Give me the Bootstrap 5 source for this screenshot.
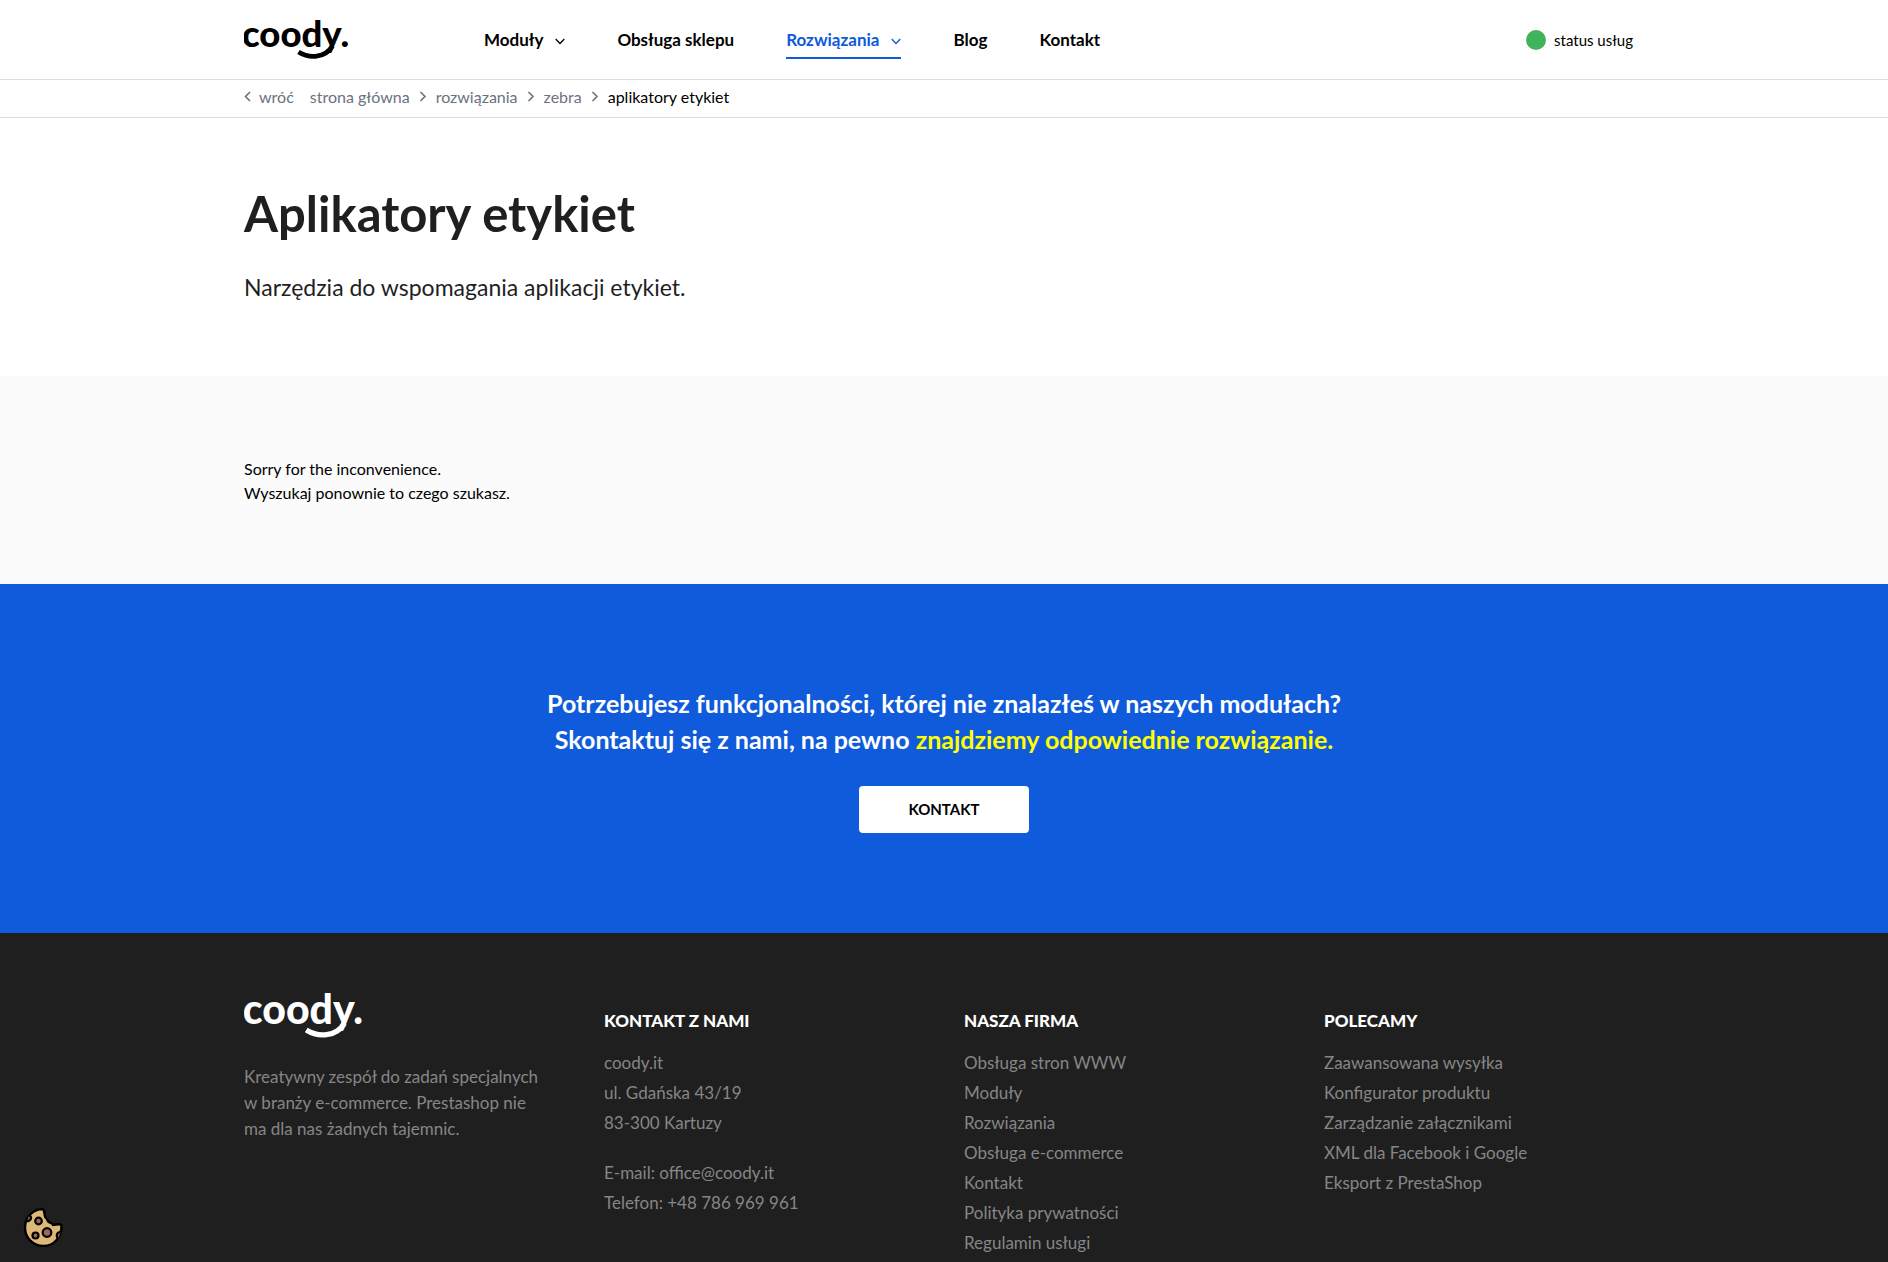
<!DOCTYPE html>
<html lang="pl">
<head>
<meta charset="utf-8">
<meta name="viewport" content="width=device-width, initial-scale=1">
<title>Aplikatory etykiet - coody.</title>
<link href="https://cdn.jsdelivr.net/npm/bootstrap@5.3.0/dist/css/bootstrap.min.css" rel="stylesheet">
<style>
  body { font-family: Lato, "Open Sans", sans-serif; font-size: 16px; line-height: 24px; color: #000; overflow-x: hidden; }
  a { text-decoration: none; }
  .wrap { max-width: 1440px; padding-left: 20px; padding-right: 20px; }
  .site-head { border-bottom: 1px solid #ddd; }
  .site-head .wrap { min-height: 79px; }
  .brand { width: 240px; }
  .main-nav { gap: 52px; font-weight: 700; font-size: 17px; }
  .main-nav .nav-link { padding: 5px 0; color: #000; border-bottom: 2px solid transparent; line-height: 24px; margin-top: 2px; }
  .main-nav .nav-link.active { color: #0f5bdb; border-bottom-color: #0f5bdb; }
  .main-nav svg { margin-left: 12px; }
  .status-link { color: #000; font-size: 15px; padding-right: 11px; }
  .status-dot { width: 20px; height: 20px; background: #3fb45b; }
  .crumbs { border-bottom: 1px solid #ddd; }
  .crumbs .wrap { min-height: 37px; padding-bottom: 4px; }
  .crumbs a { color: #6b7280; }
  .crumbs svg { color: #6b7280; }
  .hero { padding: 65px 0 73px; color: #1f1f1f; }
  .hero h1 { font-size: 49px; line-height: 60px; font-weight: 700; margin-bottom: 28px; }
  .hero p { font-size: 23px; line-height: 32px; font-weight: 400; margin: 0; }
  .notice { background: #fbfbfb; padding: 81px 0 79px; }
  .cta { background: #0f5bdb; color: #fff; padding: 101px 0 100px; }
  .cta h2 { font-size: 25px; line-height: 36px; font-weight: 700; margin-bottom: 29px; }
  .cta em { font-style: normal; color: #ff0; }
  .cta .btn { background: #fff; color: #000; font-size: 15px; font-weight: 700; line-height: 21px; padding: 12px 48px; border-radius: 4px; }
  .site-foot { background: #1f1f1f; color: #868686; padding-top: 60px; font-size: 17px; }
  .site-foot a { color: #868686; }
  .site-foot .row { --bs-gutter-x: 40px; }
  .about { line-height: 26px; margin-top: 25px; max-width: 300px; }
  .site-foot h3 { color: #fff; font-size: 17px; line-height: 24px; font-weight: 900; margin: 16px 0 15px; }
  .foot-list { line-height: 30px; margin-bottom: 20px; }
  .cookie-btn { left: 23px; bottom: 14px; }
</style>
<script src="https://cdn.jsdelivr.net/npm/bootstrap@5.3.0/dist/js/bootstrap.bundle.min.js"></script>
</head>
<body>
<svg class="d-none" aria-hidden="true">
  <symbol id="logo" viewBox="0 0 105 41">
    <text x="-2" y="27.500" font-family="Lato, sans-serif" font-weight="900" font-size="36.500" fill="currentColor">coody.</text>
    <path d="M54.500 33C65 39.500 81 39.500 88.500 27" fill="none" stroke="currentColor" stroke-width="4.800"/>
  </symbol>
  <symbol id="down" viewBox="0 0 10 7"><path d="M.7 1 5 5.500 9.300 1" fill="none" stroke="currentColor" stroke-width="1.300"/></symbol>
  <symbol id="right" viewBox="0 0 7 11"><path d="M1 1 5.500 5.500 1 10" fill="none" stroke="currentColor" stroke-width="1.600"/></symbol>
</svg>

<header class="site-head bg-white">
  <div class="wrap container-fluid d-flex align-items-center flex-wrap">
    <a class="brand text-black" href="#" aria-label="coody."><svg class="d-block" width="105" height="41"><use href="#logo"/></svg></a>
    <nav class="main-nav nav">
      <a class="nav-link" href="#">Moduły<svg width="10" height="7"><use href="#down"/></svg></a>
      <a class="nav-link" href="#">Obsługa sklepu</a>
      <a class="nav-link active" href="#">Rozwiązania<svg width="10" height="7"><use href="#down"/></svg></a>
      <a class="nav-link" href="#">Blog</a>
      <a class="nav-link" href="#">Kontakt</a>
    </nav>
    <a class="status-link d-flex align-items-center gap-2 ms-auto" href="#"><span class="status-dot rounded-circle"></span>status usług</a>
  </div>
</header>

<nav class="crumbs bg-white" aria-label="Okruszki">
  <div class="wrap container-fluid d-flex align-items-center flex-wrap">
    <a class="d-flex align-items-center me-3" href="#"><svg class="me-2" width="7" height="11"><path d="M6 1 1.500 5.500 6 10" fill="none" stroke="currentColor" stroke-width="1.600"/></svg>wróć</a>
    <a href="#">strona główna</a><svg class="mx-2" width="10" height="11"><use href="#right"/></svg>
    <a href="#">rozwiązania</a><svg class="mx-2" width="10" height="11"><use href="#right"/></svg>
    <a href="#">zebra</a><svg class="mx-2" width="10" height="11"><use href="#right"/></svg>
    <span>aplikatory etykiet</span>
  </div>
</nav>

<main>
  <section class="hero bg-white">
    <div class="wrap container-fluid">
      <h1>Aplikatory etykiet</h1>
      <p>Narzędzia do wspomagania aplikacji etykiet.</p>
    </div>
  </section>
  <section class="notice">
    <div class="wrap container-fluid">Sorry for the inconvenience.<br>Wyszukaj ponownie to czego szukasz.</div>
  </section>
  <section class="cta text-center">
    <div class="wrap container-fluid">
      <h2>Potrzebujesz funkcjonalności, której nie znalazłeś w naszych modułach?<br>Skontaktuj się z nami, na pewno <em>znajdziemy odpowiednie rozwiązanie.</em></h2>
      <button type="button" class="btn">KONTAKT</button>
    </div>
  </section>
</main>

<footer class="site-foot">
  <div class="wrap container-fluid">
    <div class="row">
      <div class="col-12 col-sm-6 col-lg-3">
        <a class="text-white" href="#" aria-label="coody."><svg class="d-block" width="120" height="46"><use href="#logo"/></svg></a>
        <p class="about">Kreatywny zespół do zadań specjalnych w branży e-commerce. Prestashop nie ma dla nas żadnych tajemnic.</p>
      </div>
      <div class="col-12 col-sm-6 col-lg-3">
        <h3>KONTAKT Z NAMI</h3>
        <ul class="foot-list list-unstyled">
          <li>coody.it</li>
          <li>ul. Gdańska 43/19</li>
          <li>83-300 Kartuzy</li>
        </ul>
        <ul class="foot-list list-unstyled">
          <li>E-mail: <a href="mailto:office@coody.it">office@coody.it</a></li>
          <li>Telefon: <a href="tel:+48786969961">+48 786 969 961</a></li>
        </ul>
      </div>
      <div class="col-12 col-sm-6 col-lg-3">
        <h3>NASZA FIRMA</h3>
        <ul class="foot-list list-unstyled">
          <li><a href="#">Obsługa stron WWW</a></li>
          <li><a href="#">Moduły</a></li>
          <li><a href="#">Rozwiązania</a></li>
          <li><a href="#">Obsługa e-commerce</a></li>
          <li><a href="#">Kontakt</a></li>
          <li><a href="#">Polityka prywatności</a></li>
          <li><a href="#">Regulamin usługi</a></li>
        </ul>
      </div>
      <div class="col-12 col-sm-6 col-lg-3">
        <h3>POLECAMY</h3>
        <ul class="foot-list list-unstyled">
          <li><a href="#">Zaawansowana wysyłka</a></li>
          <li><a href="#">Konfigurator produktu</a></li>
          <li><a href="#">Zarządzanie załącznikami</a></li>
          <li><a href="#">XML dla Facebook i Google</a></li>
          <li><a href="#">Eksport z PrestaShop</a></li>
        </ul>
      </div>
    </div>
  </div>
</footer>

<button type="button" class="cookie-btn position-fixed border-0 bg-transparent p-0" aria-label="Ustawienia cookies">
  <svg class="d-block" width="41" height="41" viewBox="0 0 41 41">
    <path d="M20 2C23 6 20 10 24 12C25 17 29 15 30 18C33 18 36 16 38.500 18C39 30 31 39 20.500 39C10 39 2 31 2 20.500C2 10 10 2 20 2Z" fill="#dcb97a" stroke="#000" stroke-width="2.400" stroke-linejoin="round"/>
    <g fill="#9b6a4f" stroke="#000" stroke-width="2.200">
      <circle cx="15.500" cy="14" r="3.300"/><circle cx="24" cy="25.500" r="4.300"/><circle cx="12.500" cy="28.500" r="3"/>
      <path d="M6 8.500C9 9 9 13.500 4 14.500M37.500 25C33 25 33 30 35.500 31.500"/>
    </g>
  </svg>
</button>
</body>
</html>
